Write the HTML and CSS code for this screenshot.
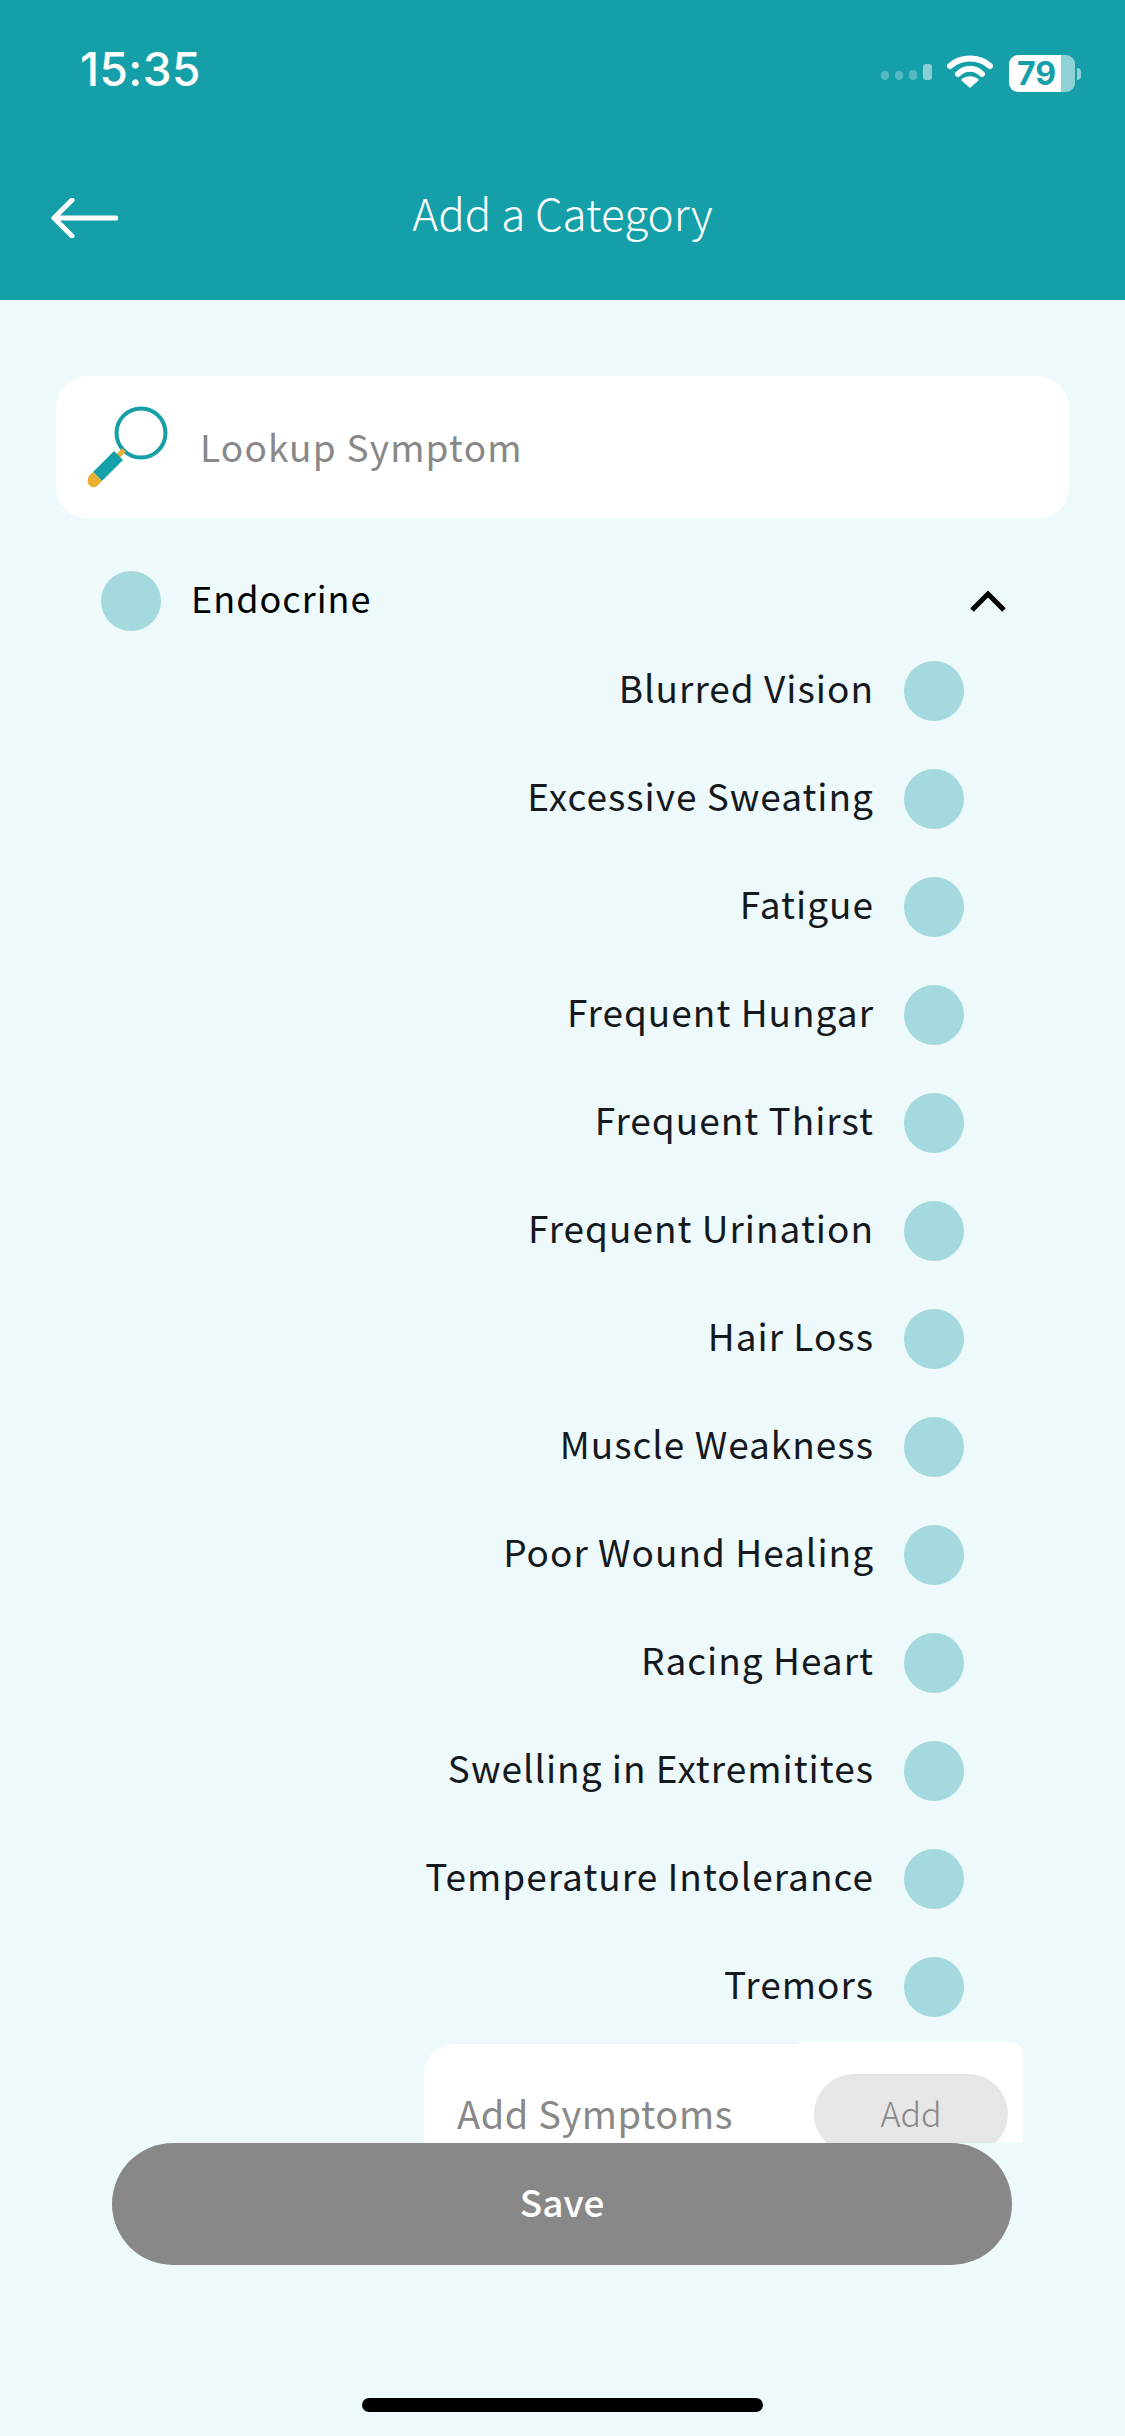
FILE: index.html
```html
<!DOCTYPE html>
<html lang="en">
<head>
<meta charset="utf-8">
<title>Add a Category</title>
<link rel="stylesheet" href="styles.css">
</head>
<body>
<div class="screen">
  <header class="header">
    <div class="status">
      <span class="time">15:35</span>
      <div class="status-icons">
        <svg class="signal" width="54" height="18" viewBox="0 0 54 18"><g fill="#fff" fill-opacity=".28"><rect x="0" y="7" width="8" height="9" rx="4"/><rect x="14" y="7" width="8" height="9" rx="4"/><rect x="28" y="6" width="8" height="10" rx="4"/></g><rect x="42" y="0" width="9" height="16" rx="3" fill="#fff" fill-opacity=".5"/></svg>
        <svg class="wifi" width="46" height="34" viewBox="0 0 46 34"><path d="M3 11 C14 1 32 1 43 11" fill="none" stroke="#fff" stroke-width="6" stroke-linecap="round"/><path d="M11 19 C18 12 28 12 35 19" fill="none" stroke="#fff" stroke-width="6" stroke-linecap="round"/><path d="M23 33 L14 25 C19 20 27 20 32 25 Z" fill="#fff"/></svg>
        <div class="battery"><span class="battery-fill"><span class="battery-num">79</span></span><span class="battery-rest"></span></div>
        <span class="battery-cap"></span>
      </div>
    </div>
    <nav class="nav">
      <svg class="back" width="68" height="40" viewBox="0 0 68 40"><path d="M22 2 L4 20 L22 38 M4 20 H66" fill="none" stroke="#fff" stroke-width="5" stroke-linecap="round" stroke-linejoin="round"/></svg>
      <h1 class="title">Add a Category</h1>
    </nav>
  </header>

  <main class="content">
    <div class="search">
      <svg class="lens" width="84" height="84" viewBox="0 0 84 84"><circle cx="54" cy="27" r="24.5" fill="none" stroke="#159fa9" stroke-width="4"/><path d="M37 44 L31 50" stroke="#e9ad32" stroke-width="5"/><path d="M27 45 L36 54 L15 75 L6 66 Z" fill="#159fa9"/><path d="M6 66 L15 75 L10 80 Q6 83 2 79 Q-1 75 2 70 Z" fill="#e9ad32"/></svg>
      <span class="search-label">Lookup Symptom</span>
    </div>

    <div class="category">
      <span class="dot"></span>
      <span class="category-name">Endocrine</span>
      <svg class="chevron" width="38" height="24" viewBox="0 0 38 24"><path d="M3 21 L19 5 L35 21" fill="none" stroke="#000" stroke-width="5"/></svg>
    </div>

    <ul class="symptoms">
      <li class="symptom"><span>Blurred Vision</span><i class="dot"></i></li>
      <li class="symptom"><span>Excessive Sweating</span><i class="dot"></i></li>
      <li class="symptom"><span>Fatigue</span><i class="dot"></i></li>
      <li class="symptom"><span>Frequent Hungar</span><i class="dot"></i></li>
      <li class="symptom"><span>Frequent Thirst</span><i class="dot"></i></li>
      <li class="symptom"><span>Frequent Urination</span><i class="dot"></i></li>
      <li class="symptom"><span>Hair Loss</span><i class="dot"></i></li>
      <li class="symptom"><span>Muscle Weakness</span><i class="dot"></i></li>
      <li class="symptom"><span>Poor Wound Healing</span><i class="dot"></i></li>
      <li class="symptom"><span>Racing Heart</span><i class="dot"></i></li>
      <li class="symptom"><span>Swelling in Extremitites</span><i class="dot"></i></li>
      <li class="symptom"><span>Temperature Intolerance</span><i class="dot"></i></li>
      <li class="symptom"><span>Tremors</span><i class="dot"></i></li>
    </ul>

    <div class="add-row">
      <div class="add-input"><span>Add Symptoms</span></div>
      <div class="add-action"><span class="add-btn">Add</span></div>
    </div>
  </main>

  <footer class="footer">
    <button class="save">Save</button>
    <div class="home-bar"></div>
  </footer>
</div>
</body>
</html>
```

FILE: styles.css
```css
* { box-sizing: border-box; }
html, body { margin: 0; padding: 0; }
body {
  width: 1125px;
  height: 2436px;
  overflow: hidden;
  background: #edf9fa;
  font-family: "Noto Sans CJK JP", "Noto Sans", sans-serif;
}
.screen { width: 1125px; height: 2436px; display: flex; flex-direction: column; }

.header { height: 300px; flex: none; background: #159fa9; color: #fff; }
.status { height: 136px; display: flex; justify-content: space-between; padding: 46px 44px 0 80px; }
.time { font-family: Inter, "Liberation Sans", sans-serif; font-size: 46px; font-weight: 500; letter-spacing: .4px; line-height: 46px; }
.status-icons { display: flex; align-items: flex-start; }
.signal { margin-top: 18px; }
.wifi { margin: 9px 0 0 12px; }
.battery { display: flex; margin: 9px 0 0 16px; width: 66px; height: 37px; border-radius: 9px; overflow: hidden; }
.battery-fill { width: 52px; background: #fff; position: relative; }
.battery-num { position: absolute; left: 8px; top: 0; font-family: Inter, "Liberation Sans", sans-serif; font-size: 32px; line-height: 37px; font-weight: 700; color: #159fa9; }
.battery-rest { flex: 1; background: #8fd3d6; }
.battery-cap { width: 4px; height: 12px; margin: 22px 0 0 2px; background: #8fd3d6; border-radius: 0 6px 6px 0; }

.nav { height: 164px; display: flex; align-items: center; position: relative; padding: 0 0 0 50px; }
.title { position: absolute; left: 0; right: 0; margin: 0; text-align: center; font-size: 44px; font-weight: 300; line-height: 60px; padding-bottom: 12px; }

.content { flex: none; height: 1843px; overflow: hidden; padding: 76px 56px 0; }
.search { height: 143px; background: #fff; border-radius: 32px; display: flex; align-items: center; padding: 0 0 0 31px; }
.lens { flex: none; }
.search-label { margin-left: 29px; padding-bottom: 4px; font-size: 37px; letter-spacing: 1.2px; color: #888; }

.dot { display: block; flex: none; width: 60px; height: 60px; border-radius: 50%; background: #a4d9de; }
.category { display: flex; align-items: center; height: 60px; margin-top: 52px; padding: 0 62px 0 45px; }
.category-name { margin-left: 30px; padding-bottom: 9px; font-size: 36px; letter-spacing: 1px; color: #000; }
.chevron { margin-left: auto; }

.symptoms { list-style: none; margin: 0; padding: 0; }
.symptom { display: flex; justify-content: flex-end; align-items: center; gap: 30px; height: 108px; padding-right: 105px; font-size: 37px; letter-spacing: 1px; color: #15191e; }
.symptom span { padding-bottom: 9px; }
.symptom:first-child { height: 60px; margin-top: 30px; margin-bottom: 24px; }

.add-row { display: flex; margin: 0 46px 0 368px; height: 120px; }
.add-input { flex: 1; min-width: 0; position: relative; z-index: 1; margin-top: 3px; background: #fff; border-radius: 30px 0 0 0; padding: 39px 0 0 33px; font-size: 38px; letter-spacing: .6px; color: #888; line-height: 60px; white-space: nowrap; }
.add-action { flex: none; width: 224px; background: #fff; border-radius: 0 14px 0 0; padding: 33px 15px 0; }
.add-btn { display: flex; width: 194px; height: 80px; align-items: center; justify-content: center; padding-bottom: 4px; background: #e6e6e6; border-radius: 50px; font-size: 34px; font-weight: 300; color: #888; }

.footer { flex: 1; padding: 0 0 0 112px; display: flex; flex-direction: column; }
.save { width: 900px; height: 122px; flex: none; padding-bottom: 8px; border: 0; border-radius: 61px; background: #888; color: #fff; font-family: inherit; font-size: 37px; font-weight: 500; }
.home-bar { align-self: center; margin: 133px 112px 0 0; width: 401px; height: 14px; border-radius: 7px; background: #000; }
```
